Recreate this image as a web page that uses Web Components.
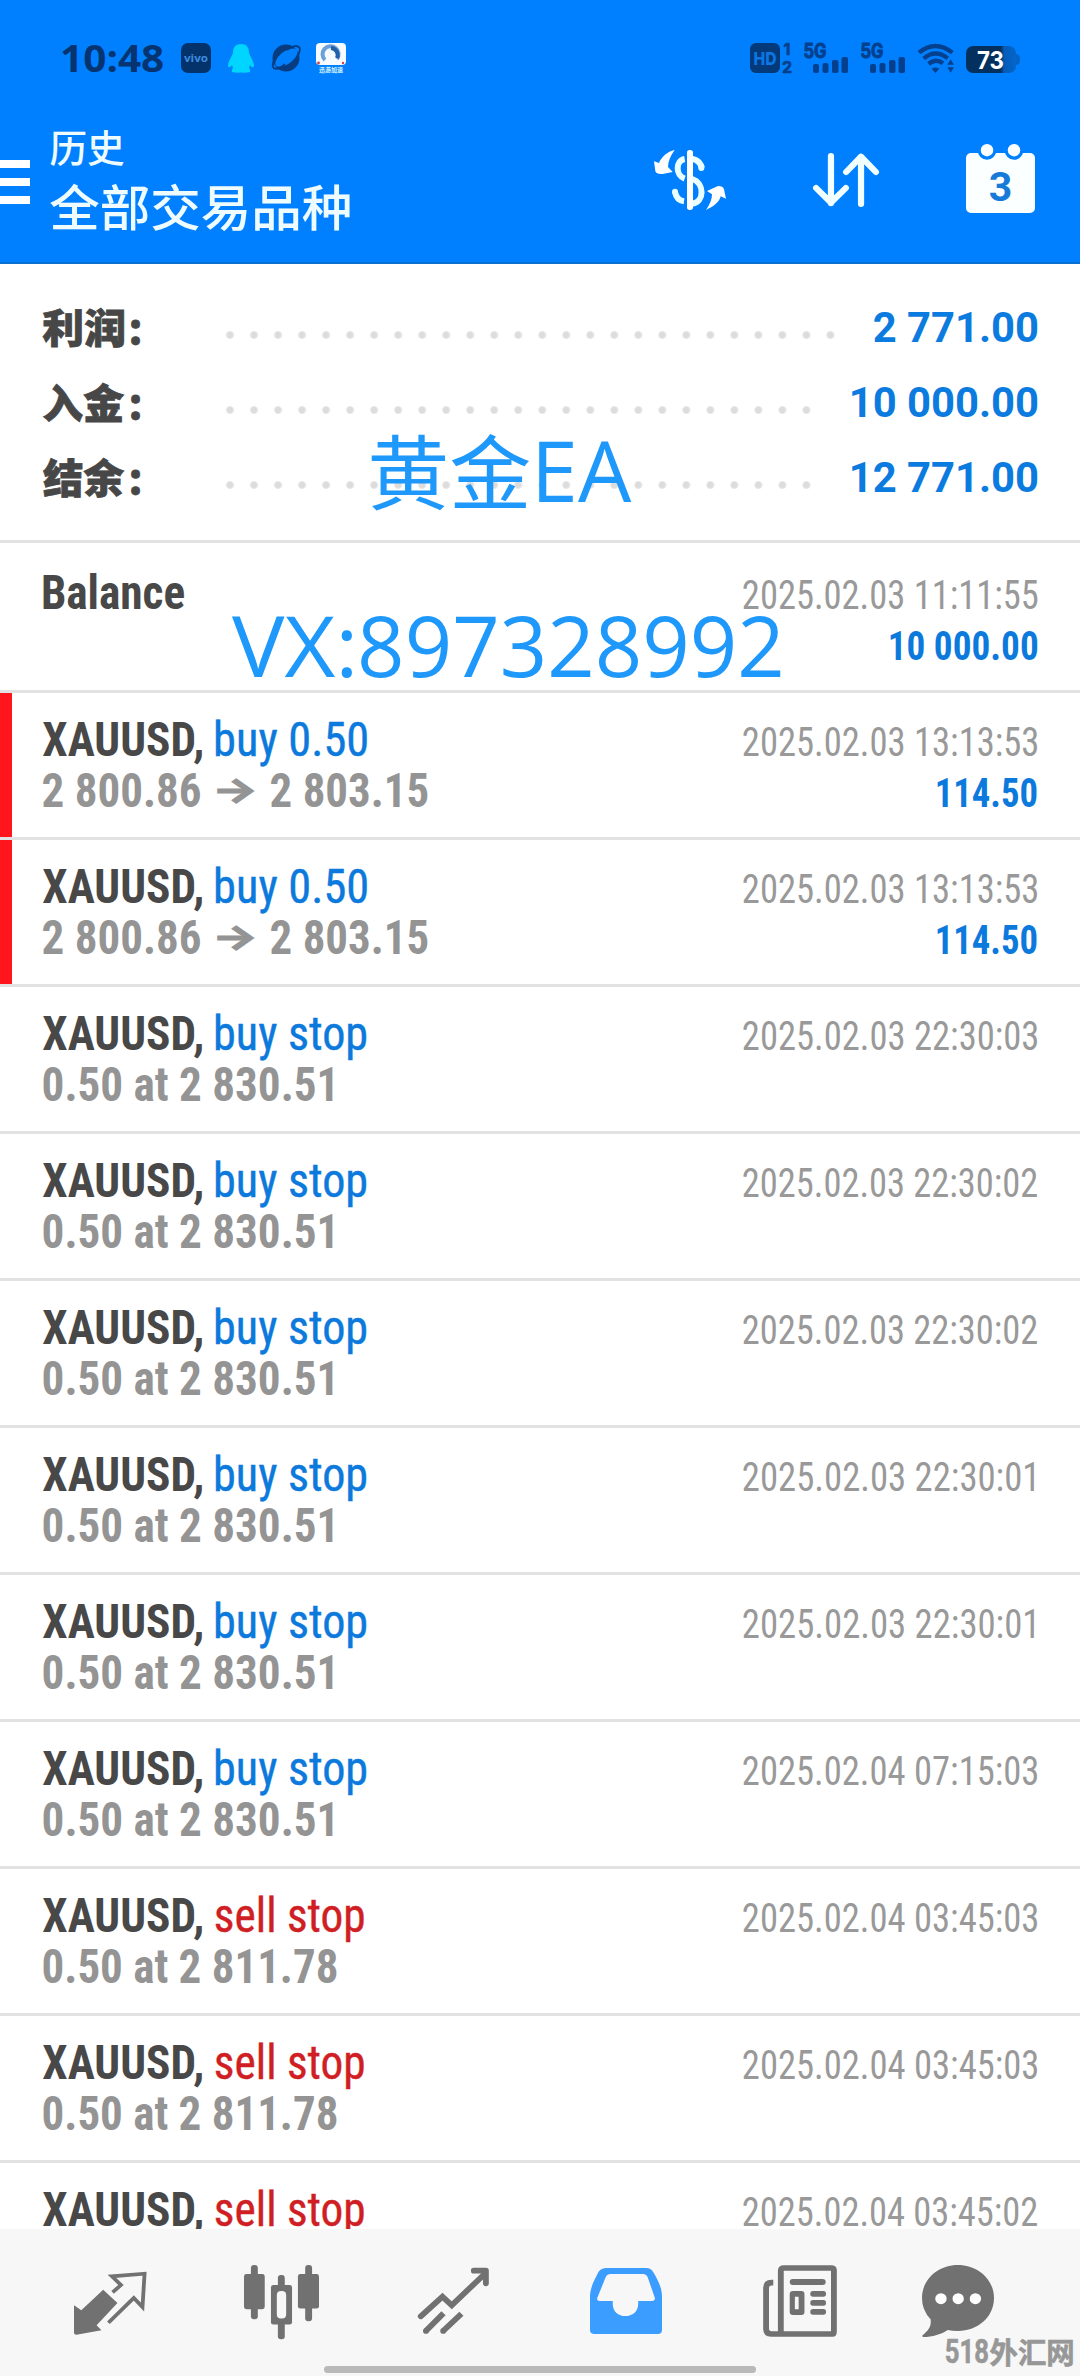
<!DOCTYPE html>
<html lang="zh-CN">
<head>
<meta charset="utf-8">
<title>历史</title>
<style>
html,body{margin:0;padding:0;background:#fff}
body{width:1080px;height:2376px;overflow:hidden;font-family:Roboto,"Noto Sans CJK SC",sans-serif}
</style>
</head>
<body>
<history-app></history-app>
<script>
/* Inline text whose glyphs are stretched to span exactly `w` pixels. */
class FitText extends HTMLElement{
  connectedCallback(){
    if(this.shadowRoot)return;
    const r=this.attachShadow({mode:'open'});
    const w=+this.getAttribute('w');
    r.innerHTML=`<style>:host{display:inline-block;flex:none;width:${w}px;white-space:pre;vertical-align:top}
      span{display:inline-block;transform-origin:0 0;white-space:pre}</style><span></span>`;
    const s=r.querySelector('span'),t=this.getAttribute('t');s.textContent=t;
    const cs=getComputedStyle(s),c=document.createElement('canvas').getContext('2d');
    c.font=`${cs.fontWeight} ${parseFloat(cs.fontSize)*10}px ${cs.fontFamily}`;
    if(parseFloat(cs.fontStretch)<100)c.fontStretch='condensed';
    const m=c.measureText(t),q=s.offsetWidth/m.width;
    const l=m.actualBoundingBoxLeft*q,a=m.actualBoundingBoxRight*q;
    const k=w/(l+a);
    s.style.transform=`matrix(${k},0,0,1,${l*k},0)`;
  }
}
customElements.define('fit-text',FitText);

const ICONS={
menu:[30,44,'0 0 30 44','<path fill="#fff" d="M0 0h30v8H0zM0 18h30v8H0zM0 36h30v8H0z"/>'],
exchange:[72,60,'42 60 216 180',`<g fill="none" stroke="#e9ffff" stroke-width="18"><path d="M186 114C180 90 158 84 146 87"/><path d="M134 87C106 92 106 136 134 146" /><path d="M157 147C194 160 194 216 157 221"/><path d="M132 214C116 212 108 202 105 186"/></g>
 <circle cx="184" cy="114" r="9" fill="#e9ffff"/><circle cx="105" cy="185" r="9" fill="#e9ffff"/>
 <rect x="141" y="60" width="18" height="180" rx="8" fill="#fff"/>
 <path fill="#fff" d="M104 60C82 64 64 82 57 99L42 94L46 124Q50 134 68 132L98 126L84 111Q84 88 104 60z"/><path fill="#fff" d="M198 240C220 230 238 217 242 199L258 206L252 178Q249 168 234 168L201 183L216 193Q216 214 198 240z"/>`],
sort:[66,54,'793 399 191 162','<g fill="none" stroke="#f2ffff" stroke-width="18" stroke-linecap="round" stroke-linejoin="round"><path d="M845 408V550M802 504L845 548L888 504M932 552V410M889 456L932 410L975 456"/></g>'],
vivo:[30,30,'0 0 30 30','<rect width="30" height="30" rx="7" fill="#04336b"/><text x="15" y="18.5" text-anchor="middle" textLength="24" lengthAdjust="spacingAndGlyphs" font-family="Open Sans" font-size="11" fill="#3d8be0">vivo</text>'],
qq:[26,29,'0 0 26 29','<path fill="#00d5ff" d="M13 0C7 0 5 4 5 9C3 14 0 18 0 22Q1 25 4 21L5 24Q3 26 4 28Q8 29 13 28.500Q18 29 22 28Q23 26 21 24L22 21Q25 25 26 22C26 18 23 14 21 9C21 4 19 0 13 0z"/>'],
planet:[30,28,'0 0 30 28','<circle cx="15" cy="14" r="13.5" fill="#073d80"/><path fill="#0080ff" d="M5 22C1 16 15 2 26 5C30 11 15 26 5 22z"/><path d="M3 16C-2 29 9 25 14 20M16 6C23 0 32 1 28 9Q27 13 25 15" fill="none" stroke="#073d80" stroke-width="1.8"/>'],
app:[30,30,'0 0 30 30','<rect width="30" height="22" rx="4" fill="#f6fbff"/><path d="M9 17A8 8 0 1 1 21 16" fill="none" stroke="#6e9fd8" stroke-width="4"/><path d="M15 5A7 7 0 0 1 21 15" fill="none" stroke="#2260a8" stroke-width="4"/><circle cx="2.5" cy="20" r="1.4" fill="#e03c3c"/><circle cx="27" cy="20" r="1.2" fill="#e03c3c"/><text x="15" y="29" text-anchor="middle" font-family="Noto Sans CJK SC" font-size="6" font-weight="700" fill="#d9f4ff">迅游加速</text>'],
hd:[42,30,'0 0 42 30','<rect width="30" height="30" rx="6" fill="#04397a"/><g font-family="Inter" font-weight="800"><text x="15" y="22" text-anchor="middle" textLength="23" lengthAdjust="spacingAndGlyphs" font-size="18" fill="#0b76e4">HD</text><g fill="#04408a" stroke="#04408a" stroke-width=".6" font-size="16" font-weight="700"><text x="33.5" y="12">1</text><text x="32" y="29.5">2</text></g></g>'],
signal:[44,30,'0 0 44 30','<text x="-.5" y="14.5" font-family="Inter" font-weight="700" font-size="19.5" textLength="23" lengthAdjust="spacingAndGlyphs" fill="#04408e" stroke="#04408e" stroke-width=".9">5G</text><g fill="#04408e"><rect x="9" y="21" width="6" height="9" rx="2"/><rect x="18.500" y="20" width="6" height="10" rx="2"/><rect x="28" y="17" width="6.500" height="13" rx="2"/><rect x="37.500" y="14" width="6.500" height="16" rx="2"/></g>'],
wifi:[36,29,'0 0 108 87','<g fill="none" stroke="#04408e" stroke-width="13"><path d="M3 26Q52 -14 103 26"/><path d="M17 44Q52 14 89 43"/><path d="M32 60Q53 42 75 58"/></g><path fill="#04408e" d="M41 74Q52 67 64 74L52 87zM98 46l10 16H88zM98 86l10-16H88z"/>'],
battery:[54,27,'0 0 54 27','<defs><linearGradient id="g"><stop offset=".7" stop-color="#04305f"/><stop offset=".76" stop-color="#045cb8"/><stop offset="1" stop-color="#0565ca"/></linearGradient></defs><rect width="50" height="27" rx="7" fill="url(#g)"/><path d="M50 8h1q3 1 3 5.500t-3 5.500h-1z" fill="#0562c4"/><text x="24.500" y="22.500" text-anchor="middle" font-family="Inter" font-weight="700" font-size="24.500" textLength="27" lengthAdjust="spacingAndGlyphs" fill="#fff">73</text>'],
calendar:[69,69,'0 0 69 69','<rect y="9" width="69" height="60" rx="5" fill="#fbffff"/><circle cx="21" cy="6.500" r="9.300" fill="#0080ff"/><circle cx="48" cy="6.500" r="9.300" fill="#0080ff"/><circle cx="21" cy="6.200" r="6.200" fill="#fbffff"/><circle cx="48" cy="6.200" r="6.200" fill="#fbffff"/><text x="34.500" y="56.500" text-anchor="middle" font-family="Roboto" font-weight="700" font-size="41" fill="#167bd8">3</text>'],
trade:[73,64,'215 271 210 192','<path fill="#717171" d="M299 327L340 367L280 434L294 449L222 462Q215 462 215 456V374L236 389z"/><path fill="none" stroke="#717171" stroke-width="11" stroke-linejoin="miter" d="M326 335L350 313L324 287L418 279L412 379L387 352L314 426"/>'],
candles:[75,74,'709 255 217 221','<g fill="#717171"><rect x="709" y="282" width="60" height="105" rx="7"/><rect x="729" y="255" width="20" height="162" rx="9"/><rect x="865" y="282" width="61" height="103" rx="7"/><rect x="886" y="255" width="20" height="168" rx="9"/><rect x="787" y="315" width="61" height="118" rx="7"/><rect x="807" y="285" width="20" height="50" rx="9"/><rect x="807" y="425" width="20" height="52" rx="9"/></g><rect x="804" y="333" width="27" height="82" rx="12" fill="#f7f7f7"/>'],
chart:[71,66,'1214 264 206 198','<g fill="none" stroke="#717171" stroke-width="17" stroke-linecap="round" stroke-linejoin="round"><path stroke-linejoin="miter" d="M1222 409L1285 350L1312 376L1408 281"/><path d="M1376 272H1411V310"/></g><g fill="none" stroke="#717171" stroke-width="17"><path d="M1236 454L1288 400M1286 454L1340 401"/></g><circle cx="1237" cy="453" r="8.500" fill="#717171"/><circle cx="1287" cy="453" r="8.500" fill="#717171"/>'],
inbox:[72,66,'147 264 209 198','<path fill="#3a9dff" fill-rule="evenodd" d="M195 264H310Q324 264 331 277C345 302 356 324 356 350V450Q356 462 344 462H160Q147 462 147 450V350C147 324 160 298 172 275Q180 264 195 264zM205 282Q197 282 193 290L168 354Q166 362 175 363H213V371C213 395 230 408 249 408C270 408 287 395 287 371V363H328Q338 361 335 353L314 290Q310 282 302 282z"/>'],
news:[74,72,'647 255 216 216','<g fill="none" stroke="#717171" stroke-width="17"><path d="M677 308H672Q656 308 656 324V447Q656 462 671 462H850Q854 462 854 454V270Q854 264 846 264H708Q699 264 699 272V462"/></g><g fill="#717171"><rect x="725" y="297" width="105" height="18" rx="9"/><rect x="785" y="333" width="46" height="17" rx="8"/><rect x="785" y="360" width="46" height="17" rx="8"/><rect x="785" y="387" width="46" height="17" rx="8"/><path fill-rule="evenodd" d="M735 333H759Q768 333 768 342V396Q768 405 759 405H735Q725 405 725 396V342Q725 333 735 333zM740 350V388H751V350z"/></g>'],
chat:[72,72,'1109 255 209 216','<path fill="#717171" d="M1213 255C1272 255 1318 299 1318 354C1318 410 1272 453 1213 453Q1197 453 1184 450C1165 463 1140 471 1112 471Q1106 468 1116 461C1132 447 1136 435 1134 418Q1109 391 1109 354C1109 299 1155 255 1213 255z"/><g fill="#fff"><circle cx="1164" cy="356" r="16.500"/><circle cx="1214" cy="356" r="16.500"/><circle cx="1264" cy="356" r="16.500"/></g>']
};
class UiIcon extends HTMLElement{
  connectedCallback(){
    if(this.shadowRoot)return;
    const [w,h,vb,body]=ICONS[this.getAttribute('name')];
    this.attachShadow({mode:'open'}).innerHTML=`<style>:host{display:block;flex:none;width:${w}px;height:${h}px}svg{display:block;overflow:visible}</style><svg width="${w}" height="${h}" viewBox="${vb}" preserveAspectRatio="none">${body}</svg>`;
  }
}
customElements.define('ui-icon',UiIcon);

class StatusBar extends HTMLElement{
  connectedCallback(){
    this.attachShadow({mode:'open'}).innerHTML=`<style>
    :host{display:flex;align-items:center;height:30px;padding:43px 60px 0 62px;color:#053470;font:700 37px/30px "Open Sans"}
    .sp{flex:1}</style>
    <fit-text t="10:48" w="101"></fit-text>
    <ui-icon name="vivo" style="margin-left:18px"></ui-icon>
    <ui-icon name="qq" style="margin-left:17px"></ui-icon>
    <ui-icon name="planet" style="margin-left:17px"></ui-icon>
    <ui-icon name="app" style="margin-left:15px"></ui-icon>
    <span class="sp"></span>
    <ui-icon name="hd"></ui-icon>
    <ui-icon name="signal" style="margin-left:12px"></ui-icon>
    <ui-icon name="signal" style="margin-left:13px"></ui-icon>
    <ui-icon name="wifi" style="margin-left:13px"></ui-icon>
    <ui-icon name="battery" style="margin:3px 0 0 12px"></ui-icon>`;
  }
}
customElements.define('status-bar',StatusBar);

class AppHeader extends HTMLElement{
  connectedCallback(){
    this.attachShadow({mode:'open'}).innerHTML=`<style>
    :host{display:block;box-sizing:border-box;height:264px;background:#0080ff;border-bottom:2px solid #0a6fd2}
    .bar{display:flex;align-items:flex-start;padding-top:44px;color:#effcff;font-family:"Noto Sans CJK SC";font-weight:500}
    .t{display:flex;flex-direction:column;margin:4px 0 0 20px;width:604px}
    .a{font-size:38px;line-height:50px}.b{font-size:49px;line-height:67px}
    </style><status-bar></status-bar>
    <div class="bar"><ui-icon name="menu" style="margin-top:43px"></ui-icon>
    <div class="t"><span class="a"><fit-text t="历史" w="74"></fit-text></span><span class="b"><fit-text t="全部交易品种" w="300"></fit-text></span></div>
    <ui-icon name="exchange" style="margin-top:33px"></ui-icon>
    <ui-icon name="sort" style="margin:36px 0 0 87px"></ui-icon>
    <ui-icon name="calendar" style="margin:27px 0 0 87px"></ui-icon></div>`;
  }
}
customElements.define('app-header',AppHeader);

class SummaryLine extends HTMLElement{
  connectedCallback(){
    const g=n=>this.getAttribute(n);
    this.attachShadow({mode:'open'}).innerHTML=`<style>
    :host{display:flex;height:75px;padding:0 43px;align-items:flex-start}
    .l{width:175px;font:900 40px/56px "Noto Sans CJK SC";color:#474747;-webkit-text-stroke:.8px #474747;display:flex}
    .c{margin:3px 0 0 7px;font-family:"Open Sans";font-size:44px;line-height:54px}
    .d{height:12px;margin-top:31px;background:radial-gradient(circle,#dcdcdc 2.5px,#e6e6e6 3.5px,transparent 4.500px) 0 0/24.020px 12px;width:${24.02*g('dots')}px}
    .v{margin:5px 0 0 auto;font:700 42px/50px Roboto;color:#0c7be0}
    </style><span class="l"><fit-text t="${g('label')}" w="${g('lw')}"></fit-text><span class="c"><fit-text t=":" w="9"></fit-text></span></span><span class="d"></span><span class="v"><fit-text t="${g('value')}" w="${g('vw')}"></fit-text></span>`;
  }
}
customElements.define('summary-line',SummaryLine);

class HistoryRow extends HTMLElement{
  connectedCallback(){
    const g=n=>this.getAttribute(n);
    const f=(t,w,c='')=>`<fit-text class="${c}" t="${t}" w="${w}"></fit-text>`;
    this.attachShadow({mode:'open'}).innerHTML=`<style>
    :host{display:flex;box-sizing:border-box;height:147px;border-bottom:3px solid #e2e2e2;padding:21px 43px 0 31px;font-stretch:75%;font-family:"Roboto Condensed",Roboto}
    :host([first]){height:150px;padding-top:24px}
    :host([mark]){box-shadow:inset 12px 0 #ff151c}
    .m{padding-left:12px}
    .line{display:flex;height:51px;line-height:51px;font-size:48px;font-weight:700;color:#949494}
    .s{color:#484848}.k{font-weight:400;color:#0c79dc;margin-left:14px;-webkit-text-stroke:.4px}.k.sell{color:#d01f24}
    .ar{font-family:Inter;font-size:34px;line-height:49px;font-weight:700;margin:0 18px 0 17px;-webkit-text-stroke:1.2px}
    .r{margin:3px 0 0 auto;display:flex;flex-direction:column;align-items:flex-end;font-size:40px;line-height:51px;color:#999}
    .v{font-weight:700;color:#0c79dc}
    </style>
    <div class="m"><div class="line">${f(g('title')||'XAUUSD,',g('title')?141:159,'s')}${g('kind')?f(g('kind'),g('kw'),'k '+(g('kind')[0]=='s'?'sell':'')):''}</div>
    <div class="line">${g('to')?f(g('sub'),158)+`<span class="ar">${f('→',35)}</span>`+f(g('to'),157):g('sub')?f(g('sub'),g('sw')):''}</div></div>
    <div class="r">${f(g('date'),294-(g('date').endsWith('1')?3:0))}${g('amount')?f(g('amount'),g('aw'),'v'):''}</div>`;
    if(g('date').endsWith('1'))this.shadowRoot.querySelector('.r fit-text').style.marginRight='3px';
  }
}
customElements.define('history-row',HistoryRow);

class TabBar extends HTMLElement{
  connectedCallback(){
    this.attachShadow({mode:'open'}).innerHTML=`<style>
    :host{display:block;height:147px;background:#f7f7f7}
    .i{display:flex;align-items:flex-start;height:137px;padding-left:74px}
    .h{width:432px;height:7px;border-radius:4px;background:#b9b9b9;margin-left:324px}
    </style><div class="i">
    <ui-icon name="trade" style="margin-top:42px"></ui-icon>
    <ui-icon name="candles" style="margin:36px 0 0 97px"></ui-icon>
    <ui-icon name="chart" style="margin:39px 0 0 99px"></ui-icon>
    <ui-icon name="inbox" style="margin:39px 0 0 101px"></ui-icon>
    <ui-icon name="news" style="margin:36px 0 0 101px"></ui-icon>
    <ui-icon name="chat" style="margin:36px 0 0 85px"></ui-icon></div><div class="h"></div>`;
  }
}
customElements.define('tab-bar',TabBar);

/* Text stamped over the page content. */
class OverlayMark extends HTMLElement{
  connectedCallback(){
    this.attachShadow({mode:'open'}).innerHTML=`<style>:host{position:absolute;display:flex;white-space:nowrap;color:#1e98fa}</style><slot></slot>`;
  }
}
customElements.define('overlay-mark',OverlayMark);

class HistoryApp extends HTMLElement{
  connectedCallback(){
    const stop=(n,d)=>`<history-row kind="${n} stop" kw="${n=='buy'?150:148}" sub="${n=='buy'?'0.50 at 2 830.51':'0.50 at 2 811.78'}" sw="${n=='buy'?290:294}" date="${d}"></history-row>`;
    const deal='<history-row mark kind="buy 0.50" kw="151" sub="2 800.86" to="2 803.15" date="2025.02.03 13:13:53" amount="114.50" aw="100"></history-row>';
    this.attachShadow({mode:'open'}).innerHTML=`<style>
    :host{display:flex;flex-direction:column;position:relative;width:1080px;height:2376px;overflow:hidden;background:#fff}
    .sum{box-sizing:border-box;flex:none;height:279px;padding-top:34px;border-bottom:3px solid #e2e2e2}
    .list{flex:1;min-height:0;overflow:hidden}
    </style>
    <app-header></app-header>
    <div class="sum"><summary-line label="利润" lw="81" dots="26" value="2 771.00" vw="163"></summary-line>
    <summary-line label="入金" lw="81" dots="25" value="10 000.00" vw="185"></summary-line>
    <summary-line label="结余" lw="81" dots="25" value="12 771.00" vw="185"></summary-line></div>
    <div class="list"><history-row first title="Balance" date="2025.02.03 11:11:55" amount="10 000.00" aw="147"></history-row>
    ${deal+deal}${['03 22:30:03','03 22:30:02','03 22:30:02','03 22:30:01','03 22:30:01','04 07:15:03'].map(d=>stop('buy','2025.02.'+d)).join('')}
    ${['03','03','02'].map(s=>stop('sell','2025.02.04 03:45:'+s)).join('')}</div>
    <tab-bar></tab-bar>
    <overlay-mark style="left:371px;top:409px;font:400 81px/117px 'Noto Sans CJK SC'"><fit-text t="黄金" w="159"></fit-text><span style="font:400 85px/121px 'Open Sans';margin-left:9px"><fit-text t="EA" w="93"></fit-text></span></overlay-mark>
    <overlay-mark style="left:232px;top:586px;font:400 85px/117px 'Open Sans'"><fit-text t="VX:" w="121"></fit-text><fit-text t="897328992" w="420" style="margin-left:8px"></fit-text></overlay-mark>
    <overlay-mark style="left:946px;top:2332px;font:700 33px/40px Roboto;color:#979797;-webkit-text-stroke:.6px"><fit-text t="518" w="42"></fit-text><span style="font:700 29px/38px 'Noto Sans CJK SC';margin-left:2px"><fit-text t="外汇网" w="83"></fit-text></span></overlay-mark>`;
  }
}
customElements.define('history-app',HistoryApp);
</script>
</body>
</html>
